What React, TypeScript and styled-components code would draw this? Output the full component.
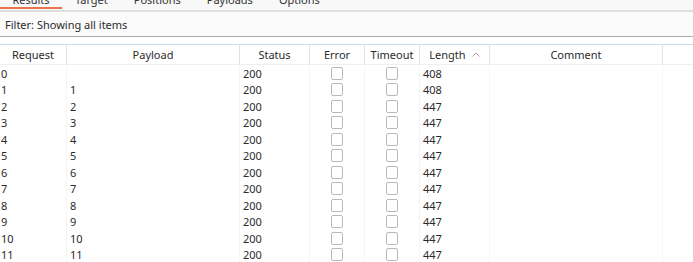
import React from 'react';
import styled, { createGlobalStyle } from 'styled-components';

const GlobalStyle = createGlobalStyle`
    html, body {
        margin: 0;
        padding: 0;
        background: #ffffff;
    }
    body {
        font-family: "Noto Sans", "Open Sans", Arial, sans-serif;
        font-size: 11px;
        color: #2b2b2b;
        overflow: hidden;
    }
`;

const tabs = ['Results', 'Target', 'Positions', 'Payloads', 'Options'];

const columns = [
    { key: 'request', label: 'Request' },
    { key: 'payload', label: 'Payload' },
    { key: 'status', label: 'Status' },
    { key: 'error', label: 'Error' },
    { key: 'timeout', label: 'Timeout' },
    { key: 'length', label: 'Length', sorted: true },
    { key: 'comment', label: 'Comment' },
    { key: 'extra', label: '' },
];

const rows = Array.from({ length: 12 }, (_, i) => ({
    request: String(i),
    payload: i === 0 ? '' : String(i),
    status: '200',
    length: i < 2 ? '408' : '447',
}));

export default function App() {
    return (<Page>
        <GlobalStyle />
        <TabBar>
            {tabs.map((t, i) => (
                <Tab key={t} active={i === 0}>{t}</Tab>
            ))}
        </TabBar>
        <FilterBar>Filter: Showing all items</FilterBar>
        <Table>
            <HeaderRow>
                {columns.map(c => (
                    <HeaderCell key={c.key}>
                        {c.label}
                        {c.sorted && <SortCaret viewBox="0 0 8 5">
                            <path d="M0.5 4.5 L4 1 L7.5 4.5" fill="none" stroke="#9a9a9a" strokeWidth="0.9" />
                        </SortCaret>}
                    </HeaderCell>
                ))}
            </HeaderRow>
            {rows.map(r => (
                <Row key={r.request}>
                    <Cell>{r.request}</Cell>
                    <Cell>{r.payload}</Cell>
                    <Cell>{r.status}</Cell>
                    <Cell center><Checkbox /></Cell>
                    <Cell center><Checkbox /></Cell>
                    <Cell>{r.length}</Cell>
                    <Cell />
                    <Cell />
                </Row>
            ))}
        </Table>
    </Page>);
}

const Page = styled.div`
    width: 693px;
    height: 262px;
    overflow: hidden;
    background: #ffffff;
`;

// the tab strip is scrolled mostly out of view, only the bottom of the labels shows
const TabBar = styled.div`
    display: flex;
    height: 10px;
    overflow: hidden;
    background: #f8f8f8;
    border-bottom: 2px solid #dedede;
`;

const Tab = styled.div<{ active: boolean }>`
    width: ${props => props.active ? '62px' : 'auto'};
    padding: 0 ${props => props.active ? '0' : '13px'};
    box-sizing: border-box;
    text-align: center;
    line-height: 11px;
    margin-top: -6px;
    height: 15px;
    color: #333;
    border-bottom: 2px solid ${props => props.active ? '#e8734d' : 'transparent'};
`;

const FilterBar = styled.div`
    height: 24px;
    line-height: 25px;
    padding-left: 5px;
    background: #fbfbfb;
    border-bottom: 1px solid #ababab;
`;

const Table = styled.div`
    margin-top: 7px;
    border-top: 1px solid #c9dcf0;
`;

const grid = `
    display: grid;
    grid-template-columns: 67px 173px 70px 55px 55px 70px 173px 1fr;
`;

const HeaderRow = styled.div`
    ${grid}
    height: 19px;
    border-bottom: 1px solid #efefef;
`;

const HeaderCell = styled.div`
    display: flex;
    align-items: center;
    justify-content: center;
    border-right: 1px solid #e3e3e3;
    color: #2b2b2b;
    &:last-child { border-right: none; }
`;

const SortCaret = styled.svg`
    width: 8px;
    height: 5px;
    margin-left: 6px;
    margin-bottom: 1px;
`;

const Row = styled.div`
    ${grid}
    height: 16.5px;
`;

const Cell = styled.div<{ center?: boolean }>`
    display: flex;
    align-items: center;
    justify-content: ${props => props.center ? 'center' : 'flex-start'};
    padding-left: ${props => props.center ? '0' : '3px'};
    border-right: 1px solid #f5f5f5;
    white-space: nowrap;
    &:first-child { padding-left: 1px; }
    &:last-child { border-right: none; }
`;

const Checkbox = styled.span`
    display: block;
    width: 10px;
    height: 11px;
    border: 1px solid #b9b9b9;
    border-radius: 2px;
    background: #ffffff;
`;
